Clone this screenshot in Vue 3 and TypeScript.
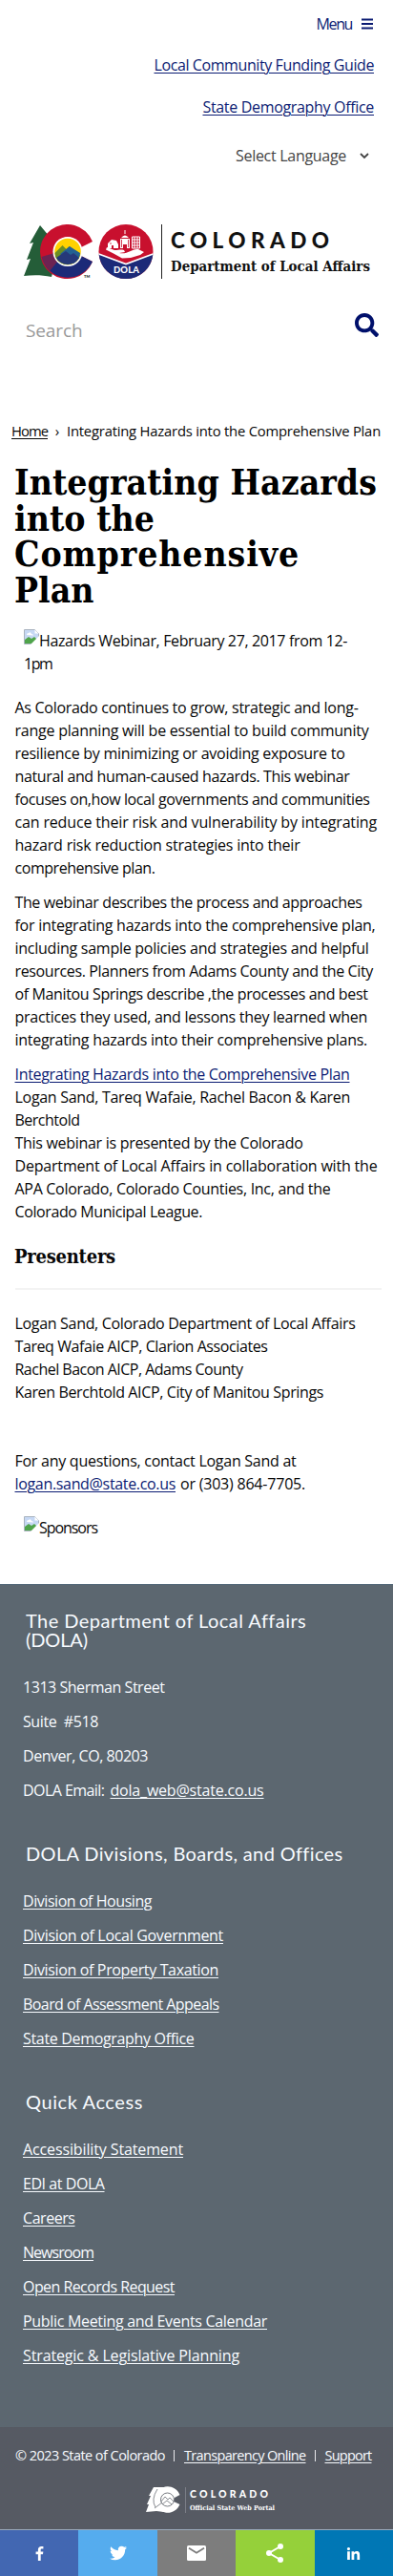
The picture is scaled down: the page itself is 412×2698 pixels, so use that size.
<script setup lang="ts">
import type { Directive } from 'vue'

type Line = [text: string, width: number]

// Spreads the letters of a run so that it fills the given measure.
const vFit: Directive<HTMLElement, number> = {
  mounted(el, { value }) {
    el.style.letterSpacing = '0px'
    const natural = el.getBoundingClientRect().width
    const count = (el.textContent ?? '').length
    if (count > 0) el.style.letterSpacing = `${((value - natural) / count).toFixed(3)}px`
  },
}

const title: Line[] = [
  ['Integrating Hazards', 380],
  ['into the', 147],
  ['Comprehensive', 299],
  ['Plan', 83.5],
]
const intro: Line[] = [
  ['As Colorado continues to grow, strategic and long-', 360],
  ['range planning will be essential to build community', 371],
  ['resilience by minimizing or avoiding exposure to', 346],
  ['natural and human-caused hazards. This webinar', 351],
  ['focuses on,how local governments and communities', 372],
  ['can reduce their risk and vulnerability by integrating', 379.5],
  ['hazard risk reduction strategies into their', 299],
  ['comprehensive plan.', 147],
]
const about: Line[] = [
  ['The webinar describes the process and approaches', 364],
  ['for integrating hazards into the comprehensive plan,', 378],
  ['including sample policies and strategies and helpful', 371],
  ['resources. Planners from Adams County and the City', 375.5],
  ['of Manitou Springs describe ,the processes and best', 370],
  ['practices they used, and lessons they learned when', 369.5],
  ['integrating hazards into their comprehensive plans.', 369.5],
]
const credits: Line[] = [
  ['Logan Sand, Tareq Wafaie, Rachel Bacon & Karen', 351.5],
  ['Berchtold', 68],
  ['This webinar is presented by the Colorado', 302],
  ['Department of Local Affairs in collaboration with the', 380],
  ['APA Colorado, Colorado Counties, Inc, and the', 331],
  ['Colorado Municipal League.', 196.5],
]
const presenters: Line[] = [
  ['Logan Sand, Colorado Department of Local Affairs', 357],
  ['Tareq Wafaie AICP, Clarion Associates', 265],
  ['Rachel Bacon AICP, Adams County', 239],
  ['Karen Berchtold AICP, City of Manitou Springs', 323.5],
]
const address: Line[] = [
  ['1313 Sherman Street', 148.5],
  ['Suite\u00a0 #518', 79],
  ['Denver, CO, 80203', 131],
]
const divisions: Line[] = [
  ['Division of Housing', 135],
  ['Division of Local Government', 210],
  ['Division of Property Taxation', 205],
  ['Board of Assessment Appeals', 205.5],
  ['State Demography Office', 179.5],
]
const quick: Line[] = [
  ['Accessibility Statement', 168],
  ['EDI at DOLA', 85.5],
  ['Careers', 54.5],
  ['Newsroom', 74],
  ['Open Records Request', 159],
  ['Public Meeting and Events Calendar', 256],
  ['Strategic & Legislative Planning', 227],
]
</script>

<template>
  <div class="page">
    <header>
      <nav class="top">
        <a class="menu" href="#"><span v-fit="37.5">Menu</span>
          <svg width="12" height="12" viewBox="0 0 12 12"><path d="M0 1.5h12M0 6h12M0 10.5h12" stroke="#0a1a72" stroke-width="2" /></svg>
        </a>
        <a class="ul" href="#"><span v-fit="230.5">Local Community Funding Guide</span></a>
        <a class="ul" href="#"><span v-fit="179.5">State Demography Office</span></a>
        <div class="lang"><span v-fit="116">Select Language</span>
          <svg width="10" height="7" viewBox="0 0 10 7"><path d="M1 1l4 4 4-4" fill="none" stroke="#444" stroke-width="1.8" /></svg>
        </div>
      </nav>

      <svg class="logo" width="372" height="60" viewBox="0 0 372 60">
        <path d="M17 1L6 20l4-1-7 18 4-1-7 18c10-1 19-1 29 1l8-30z" fill="#245d38" />
        <path d="M72 18A28.500 28.500 0 1 0 72 39L60 33A15 15 0 1 1 60 24Z" fill="#c8102e" />
        <path d="M23 44A28.500 28.500 0 0 0 72 39L60 33A15 15 0 0 1 36 36Z" fill="#1c2a78" />
        <path d="M18.500 34A28.500 28.500 0 0 0 27 49L36 38A15 15 0 0 1 32 30Z" fill="#6c2352" />
        <circle cx="46" cy="28.500" r="15.500" fill="#fff" />
        <circle cx="46" cy="28.500" r="13.800" fill="#ffd100" />
        <path d="M32.500 30l8-8 4 4 3-3 11.500 9a13.800 13.800 0 0 1-26 2z" fill="#6b8d22" />
        <path d="M38 31l10-8 11 7a13.800 13.800 0 0 1-7 11z" fill="#236192" />
        <path d="M34 35l10-7 5 4 3-2 6 5a13.800 13.800 0 0 1-24 0z" fill="#263879" />
        <text class="sans" x="63" y="56" font-size="4" fill="#222">TM</text>
        <circle cx="107" cy="28.500" r="28.500" fill="#c8102e" />
        <path d="M78.600 31l28.400 10 28.400-10a28.500 28.500 0 0 1-56.800 0z" fill="#1c2a78" />
        <path d="M78.600 31L107 41.500 135.400 31" fill="none" stroke="#fff" stroke-width="1.800" />
        <path d="M87 24l8 3c5 0 6-1 10 0l1 2-6 1c9 2 13-5 20-4l6 3-4 3-10 3-9 .500-9-5-8-4z" fill="#fff" />
        <path d="M88 20l4-4 5 1 2 4v4h-5v-3h-2v3h-4zM101 15h10v10h-3v-4h-4v4h-3zM102 14q4-5 8 0zM105.500 6h1v4h-1z" fill="#fff" />
        <path d="M102.500 16v8M109.500 16v8M90 20h2" stroke="#c8102e" stroke-width=".800" />
        <path d="M113.500 13v12h8V13zM116 13v12M119 13v12M113.500 16h8M113.500 19h8M113.500 22h8" fill="none" stroke="#fff" stroke-width="1" />
        <text class="sans" x="94" y="51.300" font-size="9.500" textLength="27" fill="#fff">DOLA</text>
        <path d="M144.500 0v57" stroke="#222" stroke-width="1" />
        <text class="sans" x="154" y="24.500" font-size="22.500" textLength="166" fill="#111">COLORADO</text>
        <text class="slab" x="154" y="49" font-size="14.400" textLength="209" lengthAdjust="spacingAndGlyphs" fill="#111">Department of Local Affairs</text>
      </svg>

      <form class="search">
        <span v-fit="59.500">Search</span>
        <svg width="25" height="25" viewBox="0 0 512 512"><path fill="#00106b" d="M505 442.700L405.300 343c-4.500-4.500-10.600-7-17-7H372c27.600-35.300 44-79.700 44-128C416 93.100 322.900 0 208 0S0 93.100 0 208s93.100 208 208 208c48.300 0 92.700-16.400 128-44v16.300c0 6.400 2.500 12.500 7 17l99.700 99.700c9.400 9.400 24.600 9.400 33.900 0l28.300-28.300c9.400-9.400 9.400-24.600.1-34zM208 336c-70.700 0-128-57.200-128-128 0-70.700 57.200-128 128-128 70.700 0 128 57.200 128 128 0 70.700-57.200 128-128 128z" /></svg>
      </form>
    </header>

    <div class="crumbs">
      <a href="#"><span v-fit="38">Home</span></a><i>›</i><span v-fit="329">Integrating Hazards into the Comprehensive Plan</span>
    </div>

    <main>
      <h1><span v-for="[t, w] in title" :key="t" class="row"><span v-fit="w">{{ t }}</span></span></h1>

      <div class="missing">
        <svg class="broken" width="16" height="16" viewBox="0 0 16 16"><path d="M.5.500h11l4 4v11H.500z" fill="#c6d8f4" stroke="#a9b3bf" /><path d="M1 15V11l4-3 3 2 3-2 4 4v3z" fill="#4fa44b" /><path d="M3 6q0-2 2-2 2-2 3 1 2 0 2 1.500z" fill="#fff" /><path d="M11.500.500v4h4M16 7L7 16h9z" fill="#fff" /></svg><span v-fit="323">Hazards Webinar, February 27, 2017 from 12-</span>
        <span class="row"><span v-fit="29.500">1pm</span></span>
      </div>

      <p><span v-for="[t, w] in intro" :key="t" class="row"><span v-fit="w">{{ t }}</span></span></p>
      <p><span v-for="[t, w] in about" :key="t" class="row"><span v-fit="w">{{ t }}</span></span></p>
      <p class="credits">
        <span class="row"><a href="#"><span v-fit="351">Integrating Hazards into the Comprehensive Plan</span></a></span>
        <span v-for="[t, w] in credits" :key="t" class="row"><span v-fit="w">{{ t }}</span></span>
      </p>

      <h2><span v-fit="106">Presenters</span></h2>
      <hr>

      <p class="list"><span v-for="[t, w] in presenters" :key="t" class="row"><span v-fit="w">{{ t }}</span></span></p>
      <p class="contact">
        <span class="row"><span v-fit="295">For any questions, contact Logan Sand at</span></span>
        <span class="row"><a href="#"><span v-fit="168.500">logan.sand@state.co.us</span></a><span v-fit="131" class="after">or (303) 864-7705.</span></span>
      </p>
      <div class="missing sponsors">
        <svg class="broken" width="16" height="16" viewBox="0 0 16 16"><path d="M.5.500h11l4 4v11H.500z" fill="#c6d8f4" stroke="#a9b3bf" /><path d="M1 15V11l4-3 3 2 3-2 4 4v3z" fill="#4fa44b" /><path d="M3 6q0-2 2-2 2-2 3 1 2 0 2 1.500z" fill="#fff" /><path d="M11.500.500v4h4M16 7L7 16h9z" fill="#fff" /></svg><span v-fit="61">Sponsors</span>
      </div>
    </main>

    <footer>
      <section>
        <h3><span class="row"><span v-fit="293.500">The Department of Local Affairs</span></span><span class="row"><span v-fit="65">(DOLA)</span></span></h3>
        <div v-for="[t, w] in address" :key="t" class="item"><span v-fit="w">{{ t }}</span></div>
        <div class="item"><span v-fit="85.500">DOLA Email:</span><a class="mail" href="#"><span v-fit="161">dola_web@state.co.us</span></a></div>
      </section>
      <section>
        <h3><span v-fit="331.500">DOLA Divisions, Boards, and Offices</span></h3>
        <div v-for="[t, w] in divisions" :key="t" class="item"><a href="#"><span v-fit="w">{{ t }}</span></a></div>
      </section>
      <section>
        <h3><span v-fit="123">Quick Access</span></h3>
        <div v-for="[t, w] in quick" :key="t" class="item"><a href="#"><span v-fit="w">{{ t }}</span></a></div>
      </section>
    </footer>

    <div class="legal">
      <div class="copy">
        <span v-fit="157">© 2023 State of Colorado</span><i></i><a href="#"><span v-fit="127.500">Transparency Online</span></a><i></i><a href="#"><span v-fit="49">Support</span></a>
      </div>
      <svg class="portal" width="144" height="30" viewBox="0 0 144 30">
        <path d="M8 1L3 10h2L1 19h2L0 27l11-1 8 1V1z" fill="#fff" />
        <path d="M35.500 9A13.700 13.700 0 1 0 35.500 19L29 16l1-4z" fill="#fff" />
        <circle cx="22.500" cy="14" r="7" fill="#fff" stroke="#565a63" stroke-width=".800" />
        <path d="M16 16l4-5 3 3 2-2 4 4M17 19l5-4 5 4M12 3Q5 14 10 22M9 23l8-6" fill="none" stroke="#565a63" stroke-width=".700" />
        <path d="M41.500 1v27" stroke="#858890" stroke-width=".800" />
        <text class="sans" x="46" y="12.300" font-size="10.500" textLength="82" fill="#fff">COLORADO</text>
        <text class="slab" x="46" y="24.800" font-size="7" textLength="89" lengthAdjust="spacingAndGlyphs" fill="#fff">Official State Web Portal</text>
      </svg>
    </div>

    <div class="share">
      <a class="fb" href="#"><svg width="21" height="21" viewBox="0 0 32 32"><path fill="#fff" d="M17.780 27.500V17.008h3.522l.527-4.090h-4.050v-2.610c0-1.182.33-1.990 2.023-1.990h2.166V4.660c-.375-.050-1.660-.160-3.155-.160-3.123 0-5.260 1.905-5.260 5.405v3.016h-3.530v4.090h3.530V27.500h4.223z" /></svg></a>
      <a class="tw" href="#"><svg width="24" height="24" viewBox="0 0 32 32"><path fill="#fff" d="M28 8.557a10 10 0 0 1-2.828.775 4.930 4.930 0 0 0 2.166-2.725 9.700 9.700 0 0 1-3.130 1.194 4.920 4.920 0 0 0-3.593-1.550 4.924 4.924 0 0 0-4.794 6.049c-4.090-.210-7.720-2.170-10.150-5.150a4.940 4.940 0 0 0-.665 2.477c0 1.710.870 3.214 2.190 4.100a5 5 0 0 1-2.230-.616v.060c0 2.390 1.700 4.380 3.952 4.830-.414.115-.850.174-1.297.174q-.476-.001-.928-.086a4.935 4.935 0 0 0 4.600 3.420 9.900 9.900 0 0 1-6.115 2.107q-.600 0-1.175-.068a13.950 13.950 0 0 0 7.550 2.213c9.056 0 14.010-7.507 14.010-14.013q0-.320-.015-.637c.960-.695 1.795-1.560 2.455-2.550z" /></svg></a>
      <a class="em" href="#"><svg width="20" height="16" viewBox="0 0 20 16"><rect width="20" height="16" rx="1.500" fill="#fff" /><path d="M2 2.800l8 5 8-5" fill="none" stroke="#7d7d7d" stroke-width="1.800" /></svg></a>
      <a class="sh" href="#"><svg width="18" height="20" viewBox="0 0 18 20"><path d="M15 3L3 10l12 7" fill="none" stroke="#fff" stroke-width="2" /><g fill="#fff"><circle cx="15" cy="3" r="3" /><circle cx="3" cy="10" r="3" /><circle cx="15" cy="17" r="3" /></g></svg></a>
      <a class="li" href="#"><svg width="21" height="21" viewBox="0 0 32 32"><path fill="#fff" d="M6.227 12.610h4.190v13.480h-4.190zm2.095-6.700a2.430 2.430 0 0 1 0 4.860c-1.344 0-2.428-1.090-2.428-2.430s1.084-2.430 2.428-2.430m4.720 6.700h4.020v1.840h.058c.560-1.058 1.927-2.176 3.965-2.176 4.238 0 5.020 2.792 5.020 6.420v7.395h-4.183v-6.560c0-1.564-.030-3.574-2.178-3.574-2.180 0-2.514 1.700-2.514 3.460v6.668h-4.187z" /></svg></a>
    </div>
  </div>
</template>

<style>
body { background: #fff; }
</style>

<style scoped>
.page { width: 412px; height: 2698px; overflow: hidden; font: 16px/24px "Open Sans", "Noto Sans", sans-serif; font-stretch: 91%; color: #080808; }
span { white-space: nowrap; }
.row { display: block; height: 24px; }
a { color: #0b1b73; text-decoration-line: underline; text-decoration-thickness: 1px; text-underline-offset: 2px; }
svg { flex: none; }
.sans { font-family: Lato, sans-serif; font-weight: 900; font-stretch: normal; }
.slab { font-family: "DejaVu Serif", serif; font-weight: bold; }

header { height: 438px; }
.top { display: flex; flex-direction: column; align-items: flex-end; padding: 13px 20px 0 0; height: 222px; box-sizing: border-box; }
.top > * { height: 24px; display: flex; align-items: center; }
.top .menu { gap: 10px; margin-right: 1px; text-decoration: none; }
.top .ul { margin-top: 19px; text-decoration-line: underline; }
.top .ul + .ul { margin-top: 20px; }
.lang { margin: 27px 5px 0 0; gap: 14px; color: #444; }
.logo { display: block; margin: 13px 0 0 25px; }
.search { display: flex; justify-content: space-between; align-items: flex-start; margin: 33px 15px 0 27px; font-size: 19px; color: #999; }
.search span { margin-top: 6px; font-size: 19px; }
.crumbs { display: flex; align-items: center; height: 24px; padding-left: 12px; font-size: 14.800px; margin-top: 1px; }
.crumbs a { color: #080808; }
.crumbs i { width: 20px; text-align: center; font-style: normal; }

main { height: 1196px; padding: 24px 12px 0 16px; box-sizing: border-box; }
h1 { margin: 0 0 0 -1px; font: bold 37px/37.600px "DejaVu Serif Condensed", "DejaVu Serif", serif; font-stretch: condensed; color: #000; }
h1 .row { height: 37.600px; }
h2 { margin: 20px 0 0 -1px; font: bold 20px/30px "DejaVu Serif Condensed", "DejaVu Serif", serif; font-stretch: condensed; }
p { margin: 0 0 12px -.500px; }
.missing { padding-left: 9px; height: 48px; margin: 22px 0; }
.broken { vertical-align: top; }
.credits { margin-bottom: 0; }
hr { height: 2px; border: 0; background: #f3f3f3; margin: 18px 0 23px; }
.list { margin-bottom: 48px; }
.contact { margin-bottom: 22px; }
.after { margin-left: 5px; }
.sponsors { margin: 0; height: 24px; }

footer { height: 883px; box-sizing: border-box; padding: 27px 20px 0 24px; background: #5c6770; border-top: 1px solid #536879; color: #f8fbff; }
footer a, .legal a { color: #f8fbff; }
section { margin-bottom: 38px; }
h3 { margin: 0 0 22px 3px; font: 20px/20px Lato, sans-serif; font-stretch: normal; }
h3 .row { height: 20px; }
.item { height: 36px; line-height: 36px; }
.mail { margin-left: 6px; }

.legal { height: 107px; background: #565a63; color: #f8fbff; overflow: hidden; }
.copy { display: flex; align-items: center; height: 24px; margin: 18px 0 0 16px; font-size: 14.500px; }
.copy i { width: 1px; height: 12px; margin: 0 10px 0 9px; background: #e8e8ec; }
.portal { display: block; margin: 20px 0 0 153px; }
.share { display: grid; grid-template-columns: repeat(5, 1fr); height: 49px; box-sizing: border-box; border-top: 1px solid #9aa9bb; }
.share a { display: flex; align-items: center; justify-content: center; }
.fb { background: #4267b2; }
.tw { background: #55acee; }
.em { background: #7d7d7d; }
.sh { background: #95d03a; }
.li { background: #0077b5; }
</style>
